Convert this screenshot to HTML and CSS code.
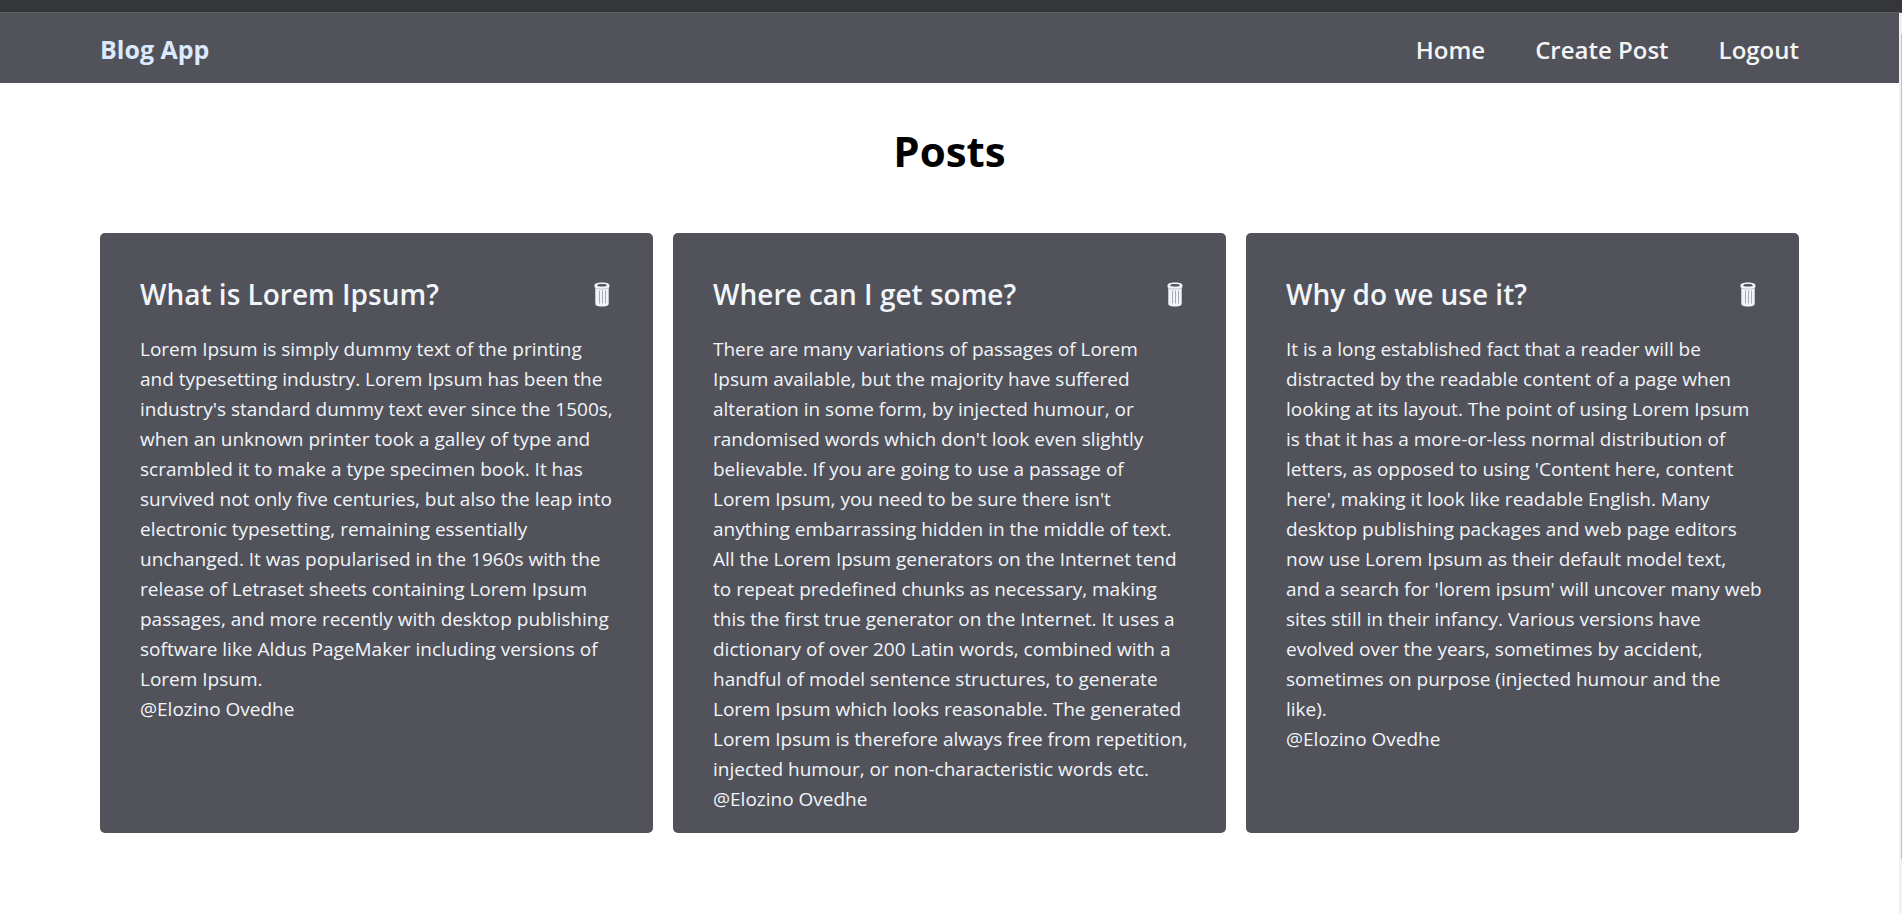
FILE: index.html
```html
<!DOCTYPE html>
<html lang="en">
<head>
<meta charset="utf-8">
<meta name="viewport" content="width=device-width, initial-scale=1">
<title>Blog App</title>
<link rel="stylesheet" href="styles.css">
</head>
<body>
<svg class="sprite" aria-hidden="true">
  <symbol id="trash" viewBox="0 0 16 25">
    <path fill="currentColor" d="M.5 3.500C.500 1.500 3 .500 8 .500s7.500 1 7.500 3c0 1-.200 1.900-.800 2.400v15.600c0 2-1.500 3-6.700 3s-6.700-1-6.700-3V5.900C.700 5.400.500 4.500.500 3.500z"/>
    <ellipse cx="8" cy="3.200" rx="4.800" ry="1.300" fill="#52525b"/>
    <path d="M2 6.200c3 1.200 9 1.200 12 0" fill="none" stroke="#a1a3ac" stroke-width=".6"/>
    <path d="M5.500 8.500v13M8.500 8.500v13M11.500 8.500v13" fill="none" stroke="#9698a2" stroke-width=".8"/>
  </symbol>
</svg>
<div class="browser-edge"></div>
<div class="viewport">
  <div class="page">
    <header class="navbar">
      <a class="brand" href="#">Blog App</a>
      <nav class="nav-links">
        <a href="#">Home</a>
        <a href="#">Create Post</a>
        <a href="#">Logout</a>
      </nav>
    </header>
    <main class="content">
      <h1 class="page-title">Posts</h1>
      <div class="posts">
        <article class="post">
          <div class="post-head">
            <h2 class="post-title">What is Lorem Ipsum?</h2>
            <button class="delete" type="button" aria-label="Delete post"><svg class="icon"><use href="#trash"/></svg></button>
          </div>
          <p class="post-body">Lorem Ipsum is simply dummy text of the printing
and typesetting industry. Lorem Ipsum has been the
industry's standard dummy text ever since the 1500s,
when an unknown printer took a galley of type and
scrambled it to make a type specimen book. It has
survived not only five centuries, but also the leap into
electronic typesetting, remaining essentially
unchanged. It was popularised in the 1960s with the
release of Letraset sheets containing Lorem Ipsum
passages, and more recently with desktop publishing
software like Aldus PageMaker including versions of
Lorem Ipsum.</p>
          <p class="post-author">@Elozino Ovedhe</p>
        </article>
        <article class="post">
          <div class="post-head">
            <h2 class="post-title">Where can I get some?</h2>
            <button class="delete" type="button" aria-label="Delete post"><svg class="icon"><use href="#trash"/></svg></button>
          </div>
          <p class="post-body">There are many variations of passages of Lorem
Ipsum available, but the majority have suffered
alteration in some form, by injected humour, or
randomised words which don't look even slightly
believable. If you are going to use a passage of
Lorem Ipsum, you need to be sure there isn't
anything embarrassing hidden in the middle of text.
All the Lorem Ipsum generators on the Internet tend
to repeat predefined chunks as necessary, making
this the first true generator on the Internet. It uses a
dictionary of over 200 Latin words, combined with a
handful of model sentence structures, to generate
Lorem Ipsum which looks reasonable. The generated
Lorem Ipsum is therefore always free from repetition,
injected humour, or non-characteristic words etc.</p>
          <p class="post-author">@Elozino Ovedhe</p>
        </article>
        <article class="post">
          <div class="post-head">
            <h2 class="post-title">Why do we use it?</h2>
            <button class="delete" type="button" aria-label="Delete post"><svg class="icon"><use href="#trash"/></svg></button>
          </div>
          <p class="post-body">It is a long established fact that a reader will be
distracted by the readable content of a page when
looking at its layout. The point of using Lorem Ipsum
is that it has a more-or-less normal distribution of
letters, as opposed to using 'Content here, content
here', making it look like readable English. Many
desktop publishing packages and web page editors
now use Lorem Ipsum as their default model text,
and a search for 'lorem ipsum' will uncover many web
sites still in their infancy. Various versions have
evolved over the years, sometimes by accident,
sometimes on purpose (injected humour and the
like).</p>
          <p class="post-author">@Elozino Ovedhe</p>
        </article>
      </div>
    </main>
  </div>
  <div class="scrollbar"><div class="scroll-thumb"></div></div>
</div>
</body>
</html>
```
FILE: styles.css
```css
* {
  box-sizing: border-box;
  margin: 0;
  padding: 0;
}

body {
  display: flex;
  flex-direction: column;
  min-height: 100vh;
  background: #fff;
  font-family: "Segoe UI", "Open Sans", "Noto Sans", sans-serif;
}

.sprite {
  display: none;
}

.browser-edge {
  height: 13px;
  background: #35363a;
  border-bottom: 1px solid #5f6063;
}

.viewport {
  display: flex;
  flex: 1;
}

.page {
  flex: 1;
}

.scrollbar {
  width: 3px;
  padding: 21px 0 54px 2px;
  background: #f1f1f1;
}

.scroll-thumb {
  height: 100%;
  background: #c1c1c1;
}

.navbar {
  display: flex;
  align-items: baseline;
  justify-content: space-between;
  padding: 18px 100px 15px;
  background: #52525b;
  font-size: 24px;
  line-height: 36px;
}

.navbar a {
  text-decoration: none;
}

.brand {
  color: #dbeafe;
  font-size: 25px;
  font-weight: 700;
}

.nav-links {
  display: flex;
  gap: 50px;
  color: #f4f4f5;
  font-weight: 600;
}

.nav-links a {
  color: inherit;
}

.content {
  padding: 38px 100px;
}

.page-title {
  margin-bottom: 52px;
  color: #000;
  font-size: 42px;
  font-weight: 700;
  line-height: 60px;
  text-align: center;
}

.posts {
  display: grid;
  grid-template-columns: repeat(3, 1fr);
  gap: 20px;
}

.post {
  padding: 39px 36px 19px 40px;
  border-radius: 5px;
  background: #52525b;
  color: #f1f5f9;
  font-size: 19px;
  line-height: 30px;
}

.post-head {
  display: flex;
  align-items: center;
  justify-content: space-between;
  margin-bottom: 18px;
  padding-right: 7px;
}

.post-title {
  font-size: 28px;
  font-weight: 600;
  line-height: 44px;
}

.post-body {
  white-space: pre-line;
}

.delete {
  display: flex;
  border: 0;
  background: none;
  color: #f1f5f9;
  cursor: pointer;
}

.icon {
  width: 16px;
  height: 25px;
}
```
